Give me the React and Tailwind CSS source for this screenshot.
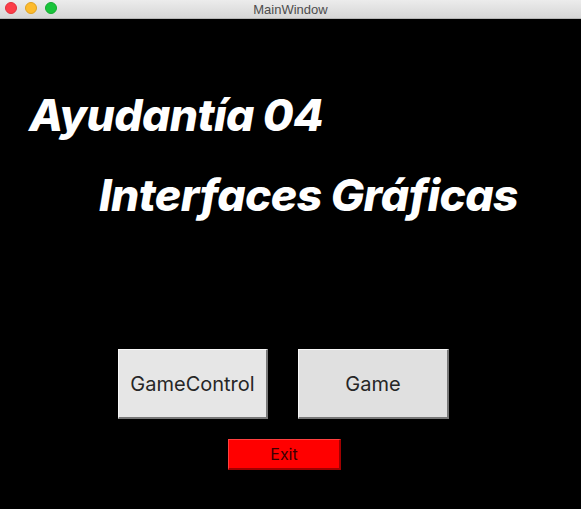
import React from 'react';

export default function App() {
    return (
        <div className="w-[581px] h-[509px] bg-black flex flex-col overflow-hidden" style={{ fontFamily: 'Inter, "Noto Sans", sans-serif' }}>
            {/* Title bar */}
            <div className="h-[19px] shrink-0 bg-gradient-to-b from-[#ececec] to-[#d6d6d6] border-b border-[#b5b5b5] relative flex items-center justify-center">
                <div className="absolute left-[5px] top-[2px] flex gap-[8px]">
                    <span className="w-[12px] h-[12px] rounded-full bg-[#fc3d48] border border-[#e2303b]" />
                    <span className="w-[12px] h-[12px] rounded-full bg-[#fdbb2d] border border-[#e0a21f]" />
                    <span className="w-[12px] h-[12px] rounded-full bg-[#19c43b] border border-[#13ab30]" />
                </div>
                <span className="text-[13px] leading-none text-[#4d4d4d]" style={{ fontFamily: '"Liberation Sans", Arial, sans-serif' }}>MainWindow</span>
            </div>

            {/* Content */}
            <div className="flex-1 flex flex-col">
                <h1 className="mt-[68px] ml-[29px] text-[44.5px] leading-[56px] font-extrabold italic text-white tracking-[-0.6px]">
                    Ayudantía 04
                </h1>
                <h2 className="mt-[24px] ml-[99px] text-[44.5px] leading-[56px] font-extrabold italic text-white tracking-[-0.6px]">
                    Interfaces Gráficas
                </h2>

                <div className="mt-[126px] flex gap-[30px] ml-[118px]">
                    <button className="w-[150px] h-[70px] bg-[#e6e6e6] border-t border-l border-t-[#f8f8f8] border-l-[#f8f8f8] border-b-2 border-r-2 border-b-[#777] border-r-[#777] text-[20px] text-[#262626]">
                        GameControl
                    </button>
                    <button className="w-[151px] h-[70px] bg-[#e0e0e0] border-t border-l border-t-[#f8f8f8] border-l-[#f8f8f8] border-b-2 border-r-2 border-b-[#777] border-r-[#777] text-[20px] text-[#262626]">
                        Game
                    </button>
                </div>

                <div className="mt-[20px] ml-[228px]">
                    <button className="w-[113px] h-[31px] bg-[#ff0000] border-t border-l border-t-[#ff4040] border-l-[#ff4040] border-b-2 border-r-2 border-b-[#a00000] border-r-[#a00000] text-[16px] text-[#3a0000] leading-none">
                        Exit
                    </button>
                </div>
            </div>
        </div>
    );
}
